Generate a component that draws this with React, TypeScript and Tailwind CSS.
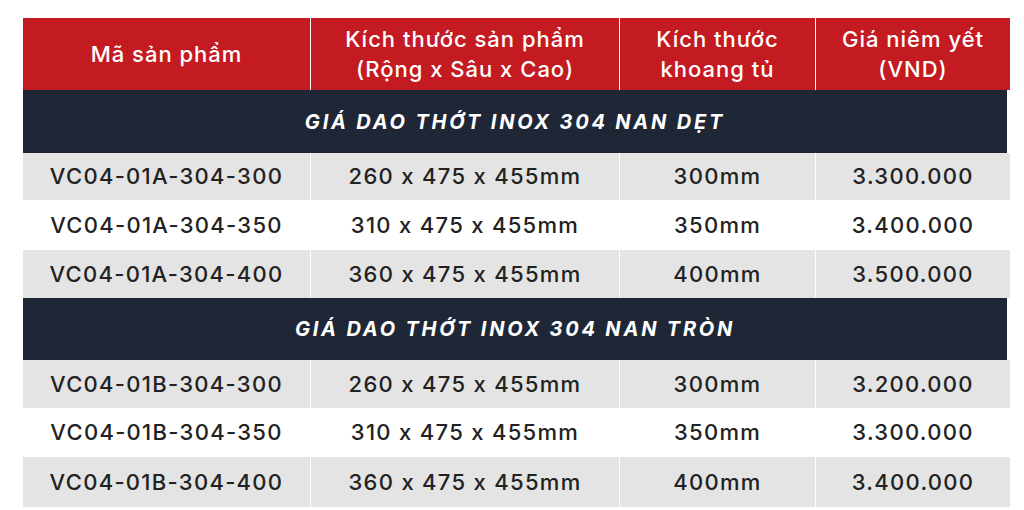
const font = { fontFamily: "Inter, 'Noto Sans', sans-serif" };

type Row = { code: string; size: string; cabinet: string; price: string };

const groups: { title: string; rows: Row[] }[] = [
  {
    title: "GIÁ DAO THỚT INOX 304 NAN DẸT",
    rows: [
      { code: "VC04-01A-304-300", size: "260 x 475 x 455mm", cabinet: "300mm", price: "3.300.000" },
      { code: "VC04-01A-304-350", size: "310 x 475 x 455mm", cabinet: "350mm", price: "3.400.000" },
      { code: "VC04-01A-304-400", size: "360 x 475 x 455mm", cabinet: "400mm", price: "3.500.000" },
    ],
  },
  {
    title: "GIÁ DAO THỚT INOX 304 NAN TRÒN",
    rows: [
      { code: "VC04-01B-304-300", size: "260 x 475 x 455mm", cabinet: "300mm", price: "3.200.000" },
      { code: "VC04-01B-304-350", size: "310 x 475 x 455mm", cabinet: "350mm", price: "3.300.000" },
      { code: "VC04-01B-304-400", size: "360 x 475 x 455mm", cabinet: "400mm", price: "3.400.000" },
    ],
  },
];

const rowHeights = [
  ["h-[47px]", "h-[50px]", "h-[48px]"],
  ["h-[48px]", "h-[49px]", "h-[50px]"],
];
const bandHeights = ["h-[63px]", "h-[62px]"];

function BodyRow({ row, shaded, height }: { row: Row; shaded: boolean; height: string }) {
  const cell = `flex items-center justify-center ${shaded ? "bg-[#e4e4e4]" : "bg-white"}`;
  return (
    <div className={`grid grid-cols-[287px_308px_195px_194px] gap-x-px ${height}`}>
      <div className={cell}>{row.code}</div>
      <div className={cell}>{row.size}</div>
      <div className={cell}>{row.cabinet}</div>
      <div className={cell}>{row.price}</div>
    </div>
  );
}

export default function App() {
  return (
    <div className="w-[1024px] h-[510px] bg-white pt-[18px] pl-[23px]" style={font}>
      <div className="w-[984px] flex flex-col text-[22px] font-medium tracking-[1.3px] text-[#222222]">
        <div className="grid grid-cols-[287px_308px_195px_194px] gap-x-px bg-white h-[72px] text-white leading-[30px] tracking-[1px]">
          <div className="flex items-center justify-center bg-[#c41a21]">Mã sản phẩm</div>
          <div className="flex flex-col items-center justify-center bg-[#c41a21] text-center">
            <span>Kích thước sản phẩm</span>
            <span>(Rộng x Sâu x Cao)</span>
          </div>
          <div className="flex flex-col items-center justify-center bg-[#c41a21] text-center">
            <span>Kích thước</span>
            <span>khoang tủ</span>
          </div>
          <div className="flex flex-col items-center justify-center bg-[#c41a21] text-center">
            <span>Giá niêm yết</span>
            <span>(VND)</span>
          </div>
        </div>
        {groups.map((g, gi) => (
          <div key={g.title} className="flex flex-col">
            <div
              className={`flex items-center justify-center bg-[#1f2736] text-white italic font-bold text-[20px] tracking-[2.8px] ${bandHeights[gi]}`}
            >
              {g.title}
            </div>
            {g.rows.map((r, ri) => (
              <BodyRow key={r.code} row={r} shaded={ri !== 1} height={rowHeights[gi][ri]} />
            ))}
          </div>
        ))}
      </div>
    </div>
  );
}
